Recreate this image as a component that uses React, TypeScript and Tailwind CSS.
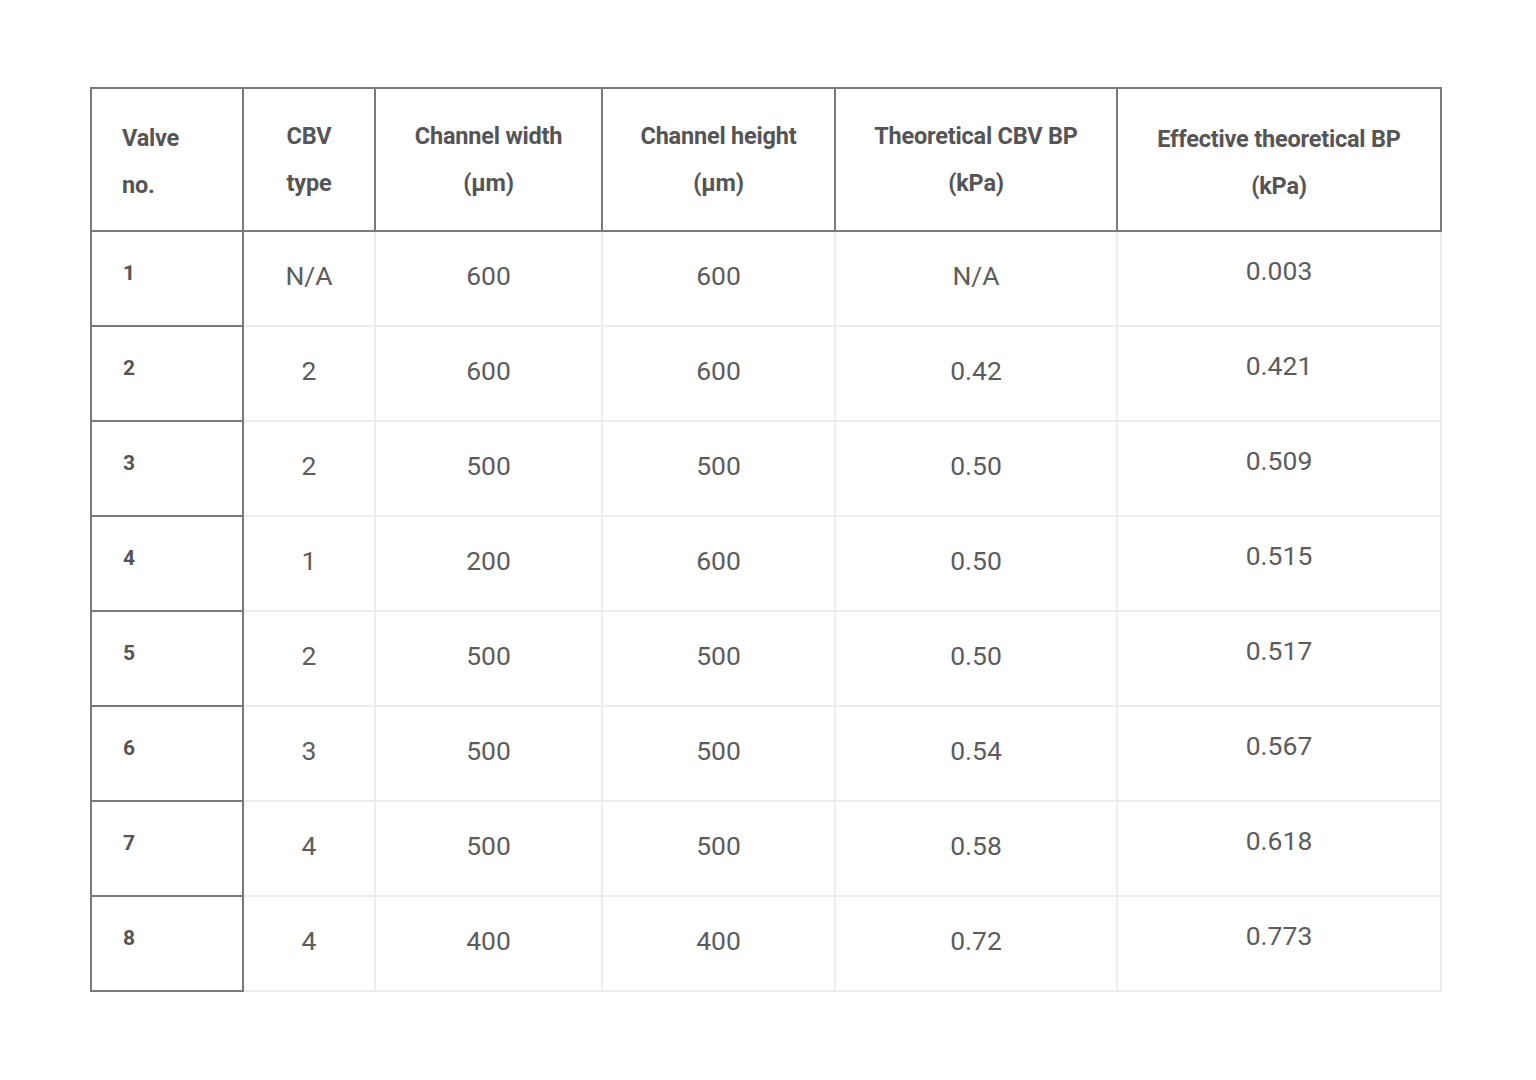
const rows = [
  ["1", "N/A", "600", "600", "N/A", "0.003"],
  ["2", "2", "600", "600", "0.42", "0.421"],
  ["3", "2", "500", "500", "0.50", "0.509"],
  ["4", "1", "200", "600", "0.50", "0.515"],
  ["5", "2", "500", "500", "0.50", "0.517"],
  ["6", "3", "500", "500", "0.54", "0.567"],
  ["7", "4", "500", "500", "0.58", "0.618"],
  ["8", "4", "400", "400", "0.72", "0.773"],
]

export default function App() {
  return (
    <div className="min-h-[1080px] w-full bg-white pt-[87px] pl-[90px] font-['Roboto',sans-serif]">
      <table className="border-collapse text-[#5c5c5c]">
        <thead>
          <tr className="h-[143px] text-[23.5px] font-bold leading-[47px] tracking-[-0.2px] text-[#555]">
            <th className="w-[152px] border-2 border-[#7a7a7a] pl-[30px] text-left align-middle">
              <div className="pt-[4px]">Valve<br />no.</div>
            </th>
            <th className="w-[132px] border-2 border-[#7a7a7a] text-center">
              CBV<br />type
            </th>
            <th className="w-[227px] border-2 border-[#7a7a7a] text-center">
              Channel width<br />(µm)
            </th>
            <th className="w-[233px] border-2 border-[#7a7a7a] text-center">
              Channel height<br />(µm)
            </th>
            <th className="w-[282px] border-2 border-[#7a7a7a] text-center">
              Theoretical CBV BP<br />(kPa)
            </th>
            <th className="w-[324px] border-2 border-[#7a7a7a] text-center">
              <div className="pt-[6px]">Effective theoretical BP<br />(kPa)</div>
            </th>
          </tr>
        </thead>
        <tbody>
          {rows.map((r) => (
            <tr key={r[0]} className="h-[95px] text-[26.5px]">
              <td className="border-2 border-[#7a7a7a] pl-[31px] pb-[10px] text-[21px] font-bold text-[#555]">
                {r[0]}
              </td>
              <td className="border-2 border-[#ececec] pb-[5px] text-center">{r[1]}</td>
              <td className="border-2 border-[#ececec] pb-[5px] text-center">{r[2]}</td>
              <td className="border-2 border-[#ececec] pb-[5px] text-center">{r[3]}</td>
              <td className="border-2 border-[#ececec] pb-[5px] text-center">{r[4]}</td>
              <td className="border-2 border-[#ececec] pb-[15px] text-center">{r[5]}</td>
            </tr>
          ))}
        </tbody>
      </table>
    </div>
  )
}
